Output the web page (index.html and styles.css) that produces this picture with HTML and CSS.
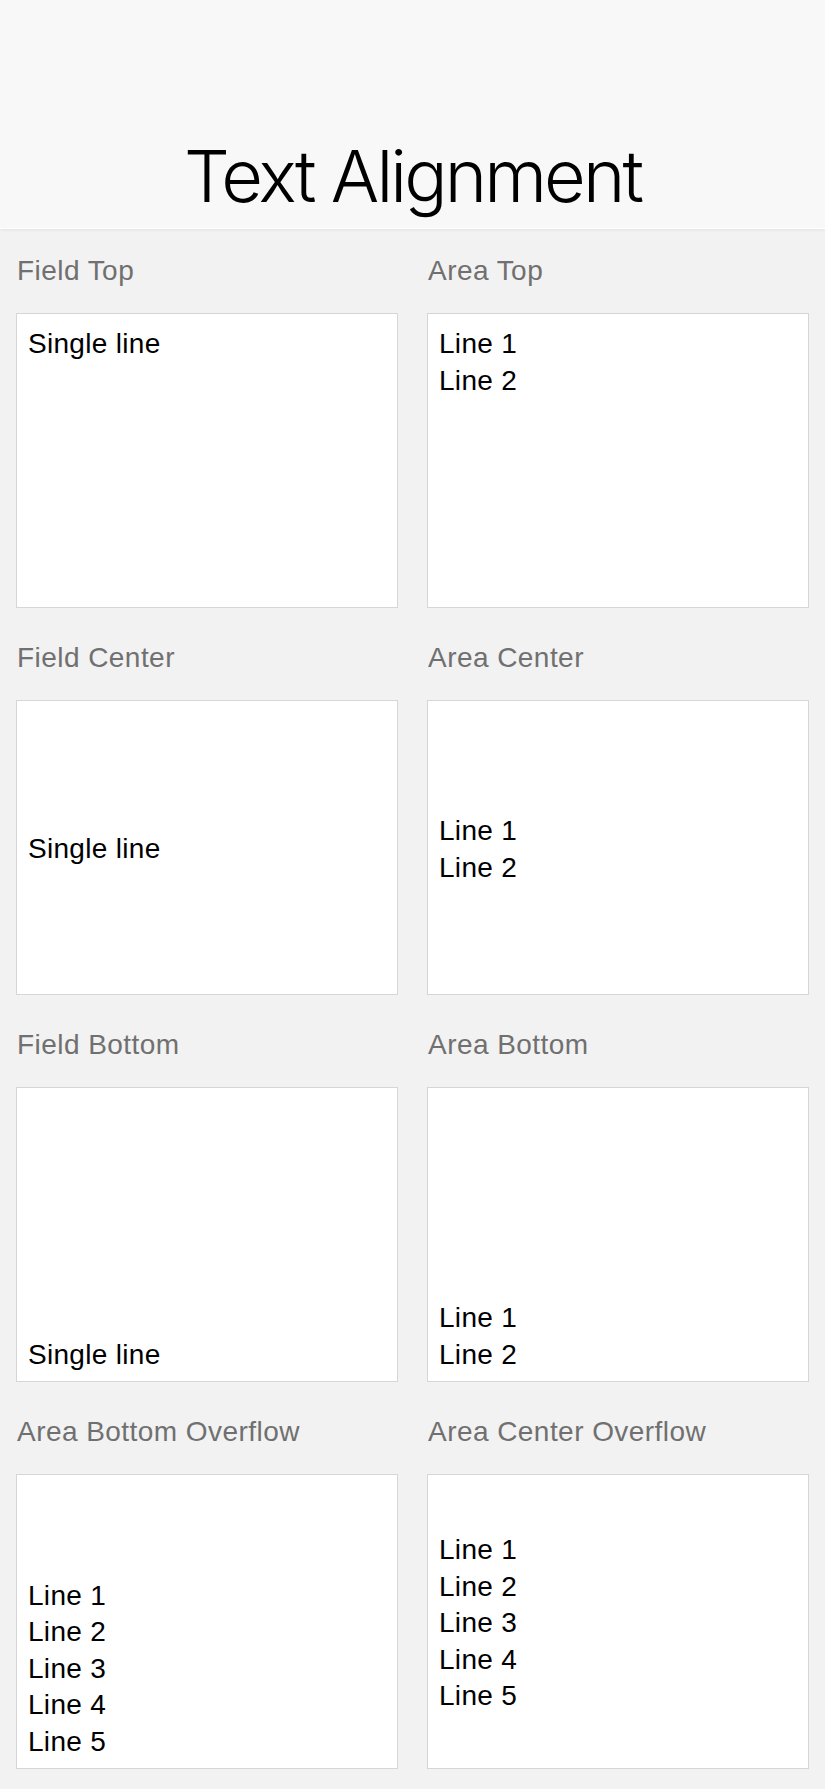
FILE: index.html
```html
<!DOCTYPE html>
<html lang="en">
<head>
<meta charset="utf-8">
<title>Text Alignment</title>
<link rel="stylesheet" href="styles.css">
</head>
<body>
<header class="header">
  <h1 class="title">Text Alignment</h1>
</header>
<main class="grid">
  <section class="cell">
    <div class="label">Field Top</div>
    <div class="box top"><div class="text">Single line</div></div>
  </section>
  <section class="cell">
    <div class="label">Area Top</div>
    <div class="box top"><div class="text">Line 1<br>Line 2</div></div>
  </section>
  <section class="cell">
    <div class="label">Field Center</div>
    <div class="box center"><div class="text">Single line</div></div>
  </section>
  <section class="cell">
    <div class="label">Area Center</div>
    <div class="box center"><div class="text">Line 1<br>Line 2</div></div>
  </section>
  <section class="cell">
    <div class="label">Field Bottom</div>
    <div class="box bottom"><div class="text">Single line</div></div>
  </section>
  <section class="cell">
    <div class="label">Area Bottom</div>
    <div class="box bottom"><div class="text">Line 1<br>Line 2</div></div>
  </section>
  <section class="cell">
    <div class="label">Area Bottom Overflow</div>
    <div class="box bottom"><div class="text">Line 1<br>Line 2<br>Line 3<br>Line 4<br>Line 5</div></div>
  </section>
  <section class="cell">
    <div class="label">Area Center Overflow</div>
    <div class="box center"><div class="text">Line 1<br>Line 2<br>Line 3<br>Line 4<br>Line 5</div></div>
  </section>
</main>
</body>
</html>
```
FILE: styles.css
```css
html, body {
  margin: 0;
  padding: 0;
}
body {
  background: #f2f2f2;
  font-family: "Liberation Sans", Arial, sans-serif;
  color: #000;
  min-height: 1789px;
}
.header {
  height: 229px;
  background: #f8f8f8;
  border-bottom: 1px solid #ffffff;
  box-shadow: 0 1px 3px rgba(0, 0, 0, 0.07);
  display: flex;
  align-items: flex-end;
  justify-content: center;
  padding-bottom: 16px;
  box-sizing: border-box;
  position: relative;
}
.title {
  margin: 0;
  font-family: Inter, "Liberation Sans", sans-serif;
  font-weight: 300;
  font-size: 72px;
  line-height: 1;
  letter-spacing: -2.9px;
  color: #000;
}
.grid {
  display: grid;
  grid-template-columns: 382px 382px;
  column-gap: 29px;
  row-gap: 34px;
  padding: 26px 16px 0 16px;
}
.cell {
  display: flex;
  flex-direction: column;
}
.label {
  font-size: 28px;
  line-height: 32px;
  letter-spacing: 0.45px;
  color: #707070;
  padding-left: 1px;
  margin-bottom: 26px;
}
.box {
  height: 295px;
  box-sizing: border-box;
  background: #fff;
  border: 1px solid #d6d6d6;
  padding: 12px 11px 8px;
  display: flex;
  flex-direction: column;
  overflow: hidden;
}
.box.top { justify-content: flex-start; }
.box.center { justify-content: center; }
.box.bottom { justify-content: flex-end; }
.text {
  font-size: 28px;
  line-height: 36.5px;
  letter-spacing: 0.3px;
}
```
